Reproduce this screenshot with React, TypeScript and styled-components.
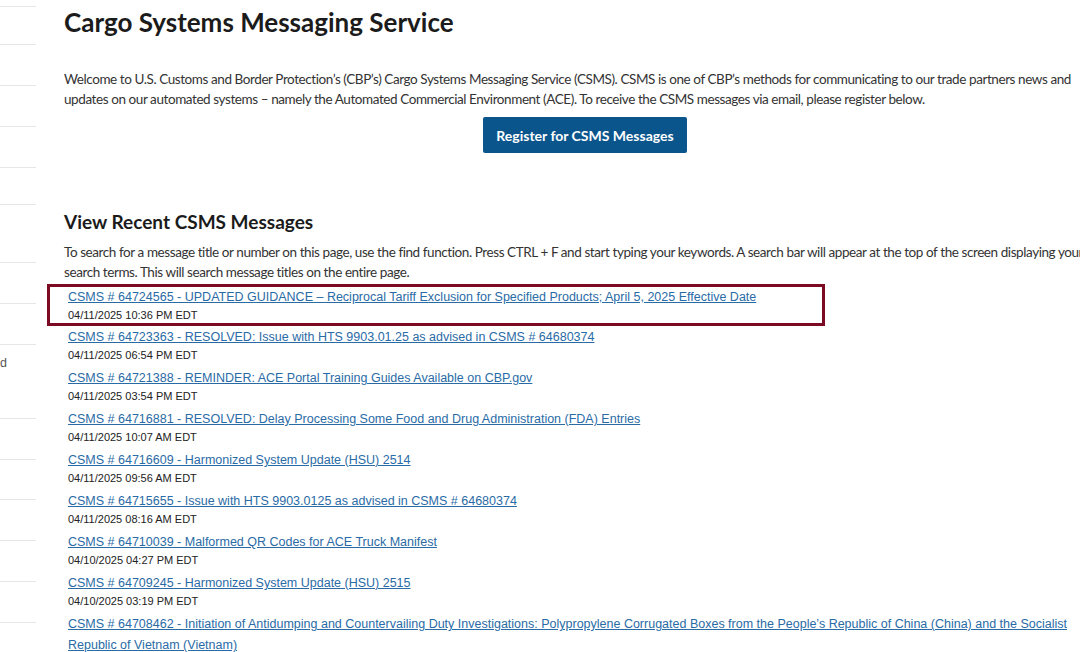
import React from "react";
import styled, { createGlobalStyle } from "styled-components";

const GlobalStyle = createGlobalStyle`
  html, body { margin: 0; padding: 0; background: #ffffff; overflow: hidden; }
  body { width: 1080px; height: 652px; }
`;

const Page = styled.div`
  display: flex;
  flex-direction: row;
  gap: 28px;
  width: 1200px;
`;

const Sidebar = styled.nav`
  width: 36px;
  flex-shrink: 0;
  overflow: hidden;
  display: flex;
  flex-direction: column;
  border-top: 1px solid #e6e6e6;
  margin-top: 6px;
  box-sizing: border-box;
`;

const SideItem = styled.div<{ $h: number }>`
  height: ${(p) => p.$h}px;
  flex-shrink: 0;
  box-sizing: border-box;
  border-bottom: 1px solid #e6e6e6;
  font-family: "Liberation Sans", Arial, sans-serif;
  font-size: 12.5px;
  line-height: 15px;
  color: #555;
  padding-top: 11px;
  white-space: nowrap;
`;

const Main = styled.main`
  width: 1042px;
  flex-shrink: 0;
  display: flex;
  flex-direction: column;
  font-family: "Lato", "Open Sans", sans-serif;
`;

const Title = styled.h1`
  margin: 4px 0 0 0;
  font-size: 26px;
  line-height: 36px;
  font-weight: 700;
  color: #1b1b1b;
`;

const Text = styled.p<{ $top: number }>`
  margin: ${(p) => p.$top}px 0 0 0;
  max-width: 1030px;
  font-size: 13.5px;
  letter-spacing: -0.42px;
  line-height: 20px;
  color: #333;
`;

const ButtonRow = styled.div`
  display: flex;
  justify-content: center;
  margin-top: 8px;
`;

const RegisterButton = styled.button`
  height: 36px;
  width: 204px;
  border: none;
  border-radius: 2px;
  background: #0b558d;
  color: #fff;
  font-family: "Lato", "Open Sans", sans-serif;
  font-weight: 700;
  font-size: 14px;
  cursor: pointer;
`;

const SectionTitle = styled.h2`
  margin: 56px 0 0 0;
  font-size: 19px;
  line-height: 26px;
  font-weight: 700;
  color: #1b1b1b;
`;

const List = styled.ul`
  list-style: none;
  margin: 5px 0 0 0;
  padding: 0 0 0 4px;
  display: flex;
  flex-direction: column;
  gap: 6px;
  font-family: "Liberation Sans", Arial, sans-serif;
`;

const Item = styled.li<{ $highlight?: boolean }>`
  display: flex;
  flex-direction: column;
  ${(p) =>
    p.$highlight
      ? `
    width: 778px;
    box-sizing: border-box;
    border: 3px solid #7b0a22;
    margin: -3px 0 -5px -21px;
    padding: 0 0 1px 18px;
  `
      : ""}
`;

const MessageLink = styled.a`
  font-size: 12.5px;
  line-height: 21px;
  color: #2a6ba6;
  text-decoration: underline;
  text-underline-offset: 1px;
`;

const DateText = styled.span`
  font-size: 11px;
  line-height: 14px;
  color: #222;
`;

const sideHeights = [38, 41, 41, 41, 37, 58, 41, 41, 74, 41, 40, 41, 41, 41, 40];

const messages = [
  {
    title:
      "CSMS # 64724565 - UPDATED GUIDANCE \u2013 Reciprocal Tariff Exclusion for Specified Products; April 5, 2025 Effective Date",
    date: "04/11/2025 10:36 PM EDT",
    highlight: true,
  },
  {
    title: "CSMS # 64723363 - RESOLVED: Issue with HTS 9903.01.25 as advised in CSMS # 64680374",
    date: "04/11/2025 06:54 PM EDT",
  },
  {
    title: "CSMS # 64721388 - REMINDER: ACE Portal Training Guides Available on CBP.gov",
    date: "04/11/2025 03:54 PM EDT",
  },
  {
    title:
      "CSMS # 64716881 - RESOLVED: Delay Processing Some Food and Drug Administration (FDA) Entries",
    date: "04/11/2025 10:07 AM EDT",
  },
  {
    title: "CSMS # 64716609 - Harmonized System Update (HSU) 2514",
    date: "04/11/2025 09:56 AM EDT",
  },
  {
    title: "CSMS # 64715655 - Issue with HTS 9903.0125 as advised in CSMS # 64680374",
    date: "04/11/2025 08:16 AM EDT",
  },
  {
    title: "CSMS # 64710039 - Malformed QR Codes for ACE Truck Manifest",
    date: "04/10/2025 04:27 PM EDT",
  },
  {
    title: "CSMS # 64709245 - Harmonized System Update (HSU) 2515",
    date: "04/10/2025 03:19 PM EDT",
  },
  {
    title:
      "CSMS # 64708462 - Initiation of Antidumping and Countervailing Duty Investigations: Polypropylene Corrugated Boxes from the People\u2019s Republic of China (China) and the Socialist Republic of Vietnam (Vietnam)",
    date: "04/10/2025 02:03 PM EDT",
  },
];

export default function App() {
  return (
    <>
      <GlobalStyle />
      <Page>
        <Sidebar>
          {sideHeights.map((h, i) => (
            <SideItem key={i} $h={h}>
              {i === 8 ? "d" : ""}
            </SideItem>
          ))}
        </Sidebar>
        <Main>
          <Title>Cargo Systems Messaging Service</Title>
          <Text $top={29}>
            Welcome to U.S. Customs and Border Protection’s (CBP’s) Cargo Systems Messaging Service
            (CSMS). CSMS is one of CBP’s methods for communicating to our trade partners news and
            updates on our automated systems – namely the Automated Commercial Environment (ACE). To
            receive the CSMS messages via email, please register below.
          </Text>
          <ButtonRow>
            <RegisterButton>Register for CSMS Messages</RegisterButton>
          </ButtonRow>
          <SectionTitle>View Recent CSMS Messages</SectionTitle>
          <Text $top={7}>
            To search for a message title or number on this page, use the find function. Press CTRL +
            F and start typing your keywords. A search bar will appear at the top of the screen
            displaying your search terms. This will search message titles on the entire page.
          </Text>
          <List>
            {messages.map((m) => (
              <Item key={m.title} $highlight={m.highlight}>
                <MessageLink href="#">{m.title}</MessageLink>
                <DateText>{m.date}</DateText>
              </Item>
            ))}
          </List>
        </Main>
      </Page>
    </>
  );
}
